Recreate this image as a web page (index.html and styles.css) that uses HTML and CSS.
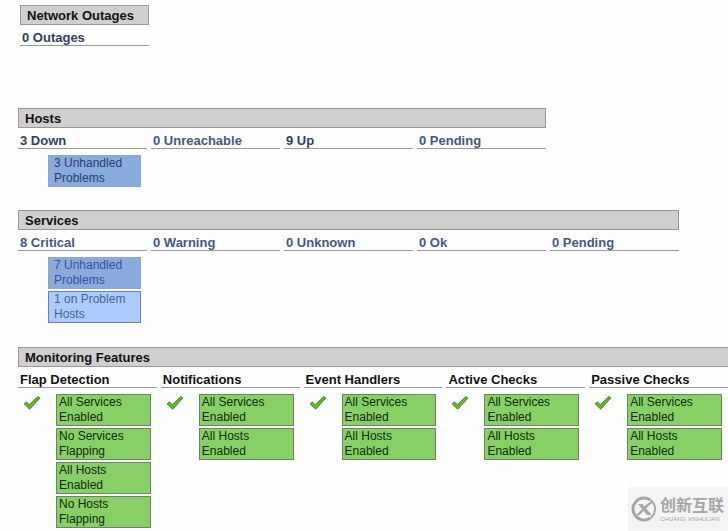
FILE: index.html
```html
<!DOCTYPE html>
<html lang="en">
<head>
    <meta charset="UTF-8">
    <meta name="viewport" content="width=device-width, initial-scale=1.0">
    <title>Tactical Monitoring Overview</title>
    <link rel="stylesheet" href="styles.css">
</head>
<body>

    <svg class="sprite" aria-hidden="true">
        <symbol id="check" viewBox="0 0 18 16">
            <path d="M1.2 8.8 L3.4 7 L6.4 9.8 L14.8 1.6 L16.8 3 L6.7 14.2 Z" fill="#63bb2c" stroke="#3c7f1c" stroke-width="1" stroke-linejoin="round"/>
        </symbol>
    </svg>

    <section class="panel outages">
        <h2 class="panel-title">Network Outages</h2>
        <div class="columns">
            <div class="column">
                <h3 class="column-title"><a class="dark" href="#">0 Outages</a></h3>
            </div>
        </div>
    </section>

    <section class="panel hosts">
        <h2 class="panel-title">Hosts</h2>
        <div class="columns">
            <div class="column">
                <h3 class="column-title"><a class="dark" href="#">3 Down</a></h3>
                <div class="boxes">
                    <a class="box problem visited" href="#">3 Unhandled<br>Problems</a>
                </div>
            </div>
            <div class="column">
                <h3 class="column-title"><a href="#">0 Unreachable</a></h3>
            </div>
            <div class="column">
                <h3 class="column-title"><a class="dark" href="#">9 Up</a></h3>
            </div>
            <div class="column">
                <h3 class="column-title"><a href="#">0 Pending</a></h3>
            </div>
        </div>
    </section>

    <section class="panel services">
        <h2 class="panel-title">Services</h2>
        <div class="columns">
            <div class="column">
                <h3 class="column-title"><a href="#">8 Critical</a></h3>
                <div class="boxes">
                    <a class="box problem" href="#">7 Unhandled<br>Problems</a>
                    <a class="box on-host" href="#">1 on Problem<br>Hosts</a>
                </div>
            </div>
            <div class="column">
                <h3 class="column-title"><a href="#">0 Warning</a></h3>
            </div>
            <div class="column">
                <h3 class="column-title"><a href="#">0 Unknown</a></h3>
            </div>
            <div class="column">
                <h3 class="column-title"><a href="#">0 Ok</a></h3>
            </div>
            <div class="column">
                <h3 class="column-title"><a href="#">0 Pending</a></h3>
            </div>
        </div>
    </section>

    <section class="panel features">
        <h2 class="panel-title">Monitoring Features</h2>
        <div class="columns">
            <div class="column">
                <h3 class="column-title">Flap Detection</h3>
                <div class="feature">
                    <svg class="check" role="img" aria-label="Enabled"><use href="#check"/></svg>
                    <div class="boxes">
                        <a class="box enabled" href="#">All Services<br>Enabled</a>
                        <a class="box enabled" href="#">No Services<br>Flapping</a>
                        <a class="box enabled" href="#">All Hosts<br>Enabled</a>
                        <a class="box enabled" href="#">No Hosts<br>Flapping</a>
                    </div>
                </div>
            </div>
            <div class="column">
                <h3 class="column-title">Notifications</h3>
                <div class="feature">
                    <svg class="check" role="img" aria-label="Enabled"><use href="#check"/></svg>
                    <div class="boxes">
                        <a class="box enabled" href="#">All Services<br>Enabled</a>
                        <a class="box enabled" href="#">All Hosts<br>Enabled</a>
                    </div>
                </div>
            </div>
            <div class="column">
                <h3 class="column-title">Event Handlers</h3>
                <div class="feature">
                    <svg class="check" role="img" aria-label="Enabled"><use href="#check"/></svg>
                    <div class="boxes">
                        <a class="box enabled" href="#">All Services<br>Enabled</a>
                        <a class="box enabled" href="#">All Hosts<br>Enabled</a>
                    </div>
                </div>
            </div>
            <div class="column">
                <h3 class="column-title">Active Checks</h3>
                <div class="feature">
                    <svg class="check" role="img" aria-label="Enabled"><use href="#check"/></svg>
                    <div class="boxes">
                        <a class="box enabled" href="#">All Services<br>Enabled</a>
                        <a class="box enabled" href="#">All Hosts<br>Enabled</a>
                    </div>
                </div>
            </div>
            <div class="column">
                <h3 class="column-title">Passive Checks</h3>
                <div class="feature">
                    <svg class="check" role="img" aria-label="Enabled"><use href="#check"/></svg>
                    <div class="boxes">
                        <a class="box enabled" href="#">All Services<br>Enabled</a>
                        <a class="box enabled" href="#">All Hosts<br>Enabled</a>
                    </div>
                </div>
            </div>
        </div>
    </section>

    <div class="watermark">
        <svg class="watermark-logo" viewBox="0 0 26 26" aria-hidden="true">
            <path d="M19 3.8 A11 11 0 1 0 19 22.2" fill="none" stroke="#a6a6a6" stroke-width="3"/>
            <path d="M19 3.8 Q24 7 24 13 Q24 19 19 22.2" fill="none" stroke="#a6a6a6" stroke-width="2"/>
            <path d="M7 8 H11.5 L20.5 19 H16 Z" fill="#a6a6a6"/>
            <path d="M23 5 L14.5 13 L8 19.5 H5 L12 12 Q17 6 23 5 Z" fill="#a6a6a6"/>
        </svg>
        <div class="watermark-text">
            <span class="watermark-name" lang="zh">创新互联</span>
            <span class="watermark-latin">CHUANG XINHULIAN</span>
        </div>
    </div>

</body>
</html>
```
FILE: styles.css
```css
body {
    font-family: "Liberation Sans", Arial, sans-serif;
    font-size: 12px;
    line-height: 15px;
    margin: 0;
    padding: 5px 0 0 18px;
    background-color: #fefefe;
    color: #111;
}

a {
    color: #46587f;
    text-decoration: none;
}

a:hover {
    text-decoration: underline;
}

a.dark {
    color: #333f5c;
}

.sprite {
    position: absolute;
    width: 0;
    height: 0;
}

.panel-title,
.column-title {
    margin: 0;
    font-size: 13px;
    font-weight: bold;
}

.panel-title {
    padding: 2px 6px 1px;
    background-color: #cfcfcf;
    border: 1px solid #999;
}

.column-title {
    padding: 5px 2px 0;
    border-bottom: 1px solid #999;
    white-space: nowrap;
}

.columns {
    display: grid;
    gap: 4px;
}

.outages {
    max-width: 129px;
    margin-left: 2px;
    margin-bottom: 62px;
}

.hosts {
    max-width: 528px;
    margin-bottom: 23px;
}

.hosts .columns {
    grid-template-columns: repeat(4, 1fr);
}

.services {
    max-width: 661px;
    margin-bottom: 24px;
}

.services .columns,
.features .columns {
    grid-template-columns: repeat(5, 1fr);
}

/* runs to the right edge of the window */
.features .panel-title {
    border-right: none;
}

.boxes {
    display: flex;
    flex-direction: column;
    gap: 2px;
    padding: 6px 6px 0 30px;
}

.feature {
    display: flex;
}

.feature .boxes {
    flex: 1;
    padding-left: 15px;
}

.check {
    width: 18px;
    height: 16px;
    margin: 7px 0 0 5px;
}

.box {
    padding: 0 5px;
    border: 1px solid #6f7f98;
    white-space: nowrap;
}

.problem {
    background-color: #88aadd;
    border-color: #8ea6c8;
    color: #36539a;
}

.visited {
    color: #2b3d6e;
}

.on-host {
    background-color: #aaccff;
    color: #46639c;
}

.enabled {
    padding: 0 2px;
    background-color: #88d066;
    border-color: #6f7f68;
    color: #0f2a0a;
}

.watermark {
    position: absolute;
    right: 0;
    bottom: 0;
    display: flex;
    align-items: center;
    gap: 3px;
    box-sizing: border-box;
    width: 100px;
    height: 44px;
    padding-left: 3px;
    background-color: #f4f4f4;
    color: #a6a6a6;
}

.watermark-logo {
    flex: none;
    width: 26px;
    height: 26px;
}

.watermark-text {
    display: flex;
    flex-direction: column;
    white-space: nowrap;
}

.watermark-name {
    font-family: "Liberation Sans", "Noto Sans CJK SC", sans-serif;
    font-size: 16px;
    font-weight: bold;
    line-height: 19px;
}

.watermark-latin {
    font-size: 6px;
    line-height: 8px;
}
```
